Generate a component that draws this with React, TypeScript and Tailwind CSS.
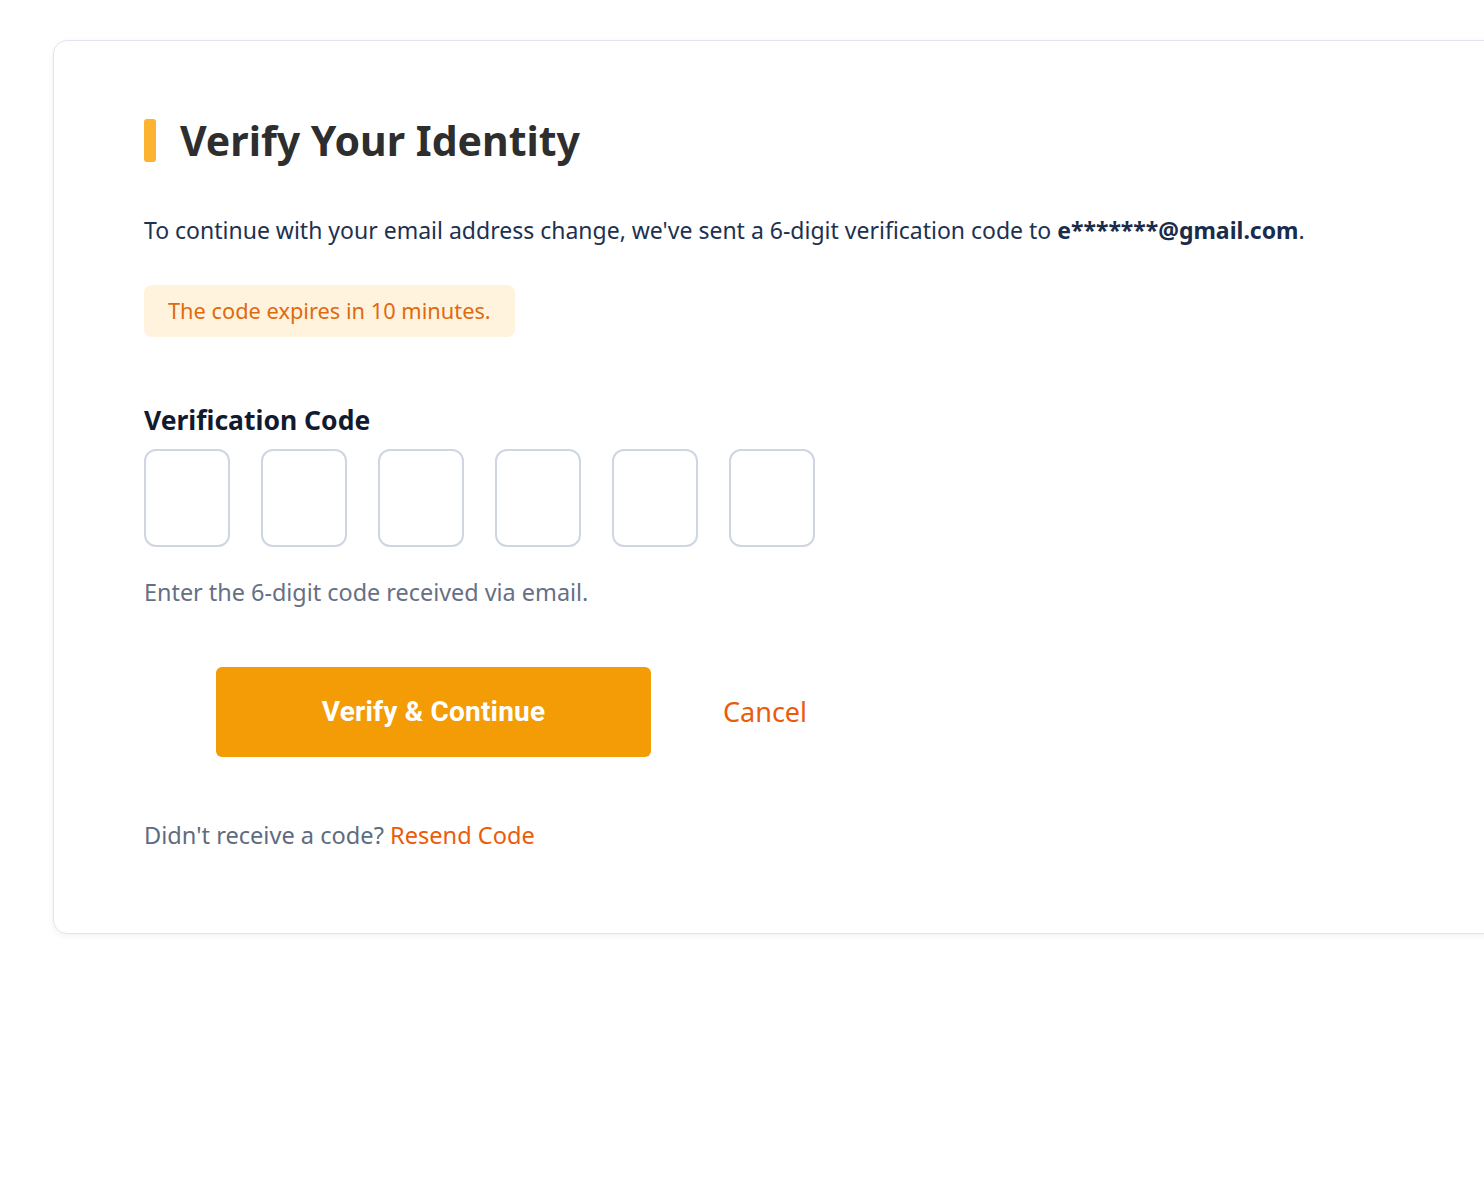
import React from 'react';

const digits = [0, 1, 2, 3, 4, 5];

export default function App() {
  return (
    <div className="min-h-[1178px] w-full overflow-hidden bg-white font-['Noto_Sans','Lato',sans-serif]">
      <div className="pl-[53px] pt-[40px]">
        {/* Card */}
        <div className="w-[1500px] rounded-[14px] border border-[#e2e4ef] bg-white pb-[83px] pl-[90px] pt-[78px] shadow-[0_2px_6px_rgba(30,40,90,0.06)]">
          <div className="flex h-[43px] items-center gap-6">
            <span className="h-[43px] w-3 rounded-[3px] bg-[#fbb331]" />
            <h1 className="text-[41px] font-bold leading-none text-[#2e2e2e]">Verify Your Identity</h1>
          </div>

          <p className="mt-[52px] text-[23px] leading-8 text-[#1d3150]">
            To continue with your email address change, we've sent a 6-digit verification code to{' '}
            <strong className="font-bold text-[#192c4b]">e*******@gmail.com</strong>.
          </p>

          <div className="mt-[39px] inline-flex h-[52px] items-center rounded-lg bg-[#fff3de] px-6 text-[21.8px] text-[#df6a0e]">
            The code expires in 10 minutes.
          </div>

          {/* Code inputs */}
          <label className="mt-[67px] block text-[26.5px] font-bold leading-8 text-[#111a2e]">Verification Code</label>
          <div className="mt-[13px] flex gap-[31px]">
            {digits.map((d) => (
              <input
                key={d}
                maxLength={1}
                className="h-[98px] w-[86px] rounded-xl border-2 border-[#cfd6e2] bg-white text-center text-3xl outline-none"
              />
            ))}
          </div>
          <p className="mt-[30px] text-[23.4px] leading-[30px] text-[#667085]">Enter the 6-digit code received via email.</p>

          <div className="ml-[72px] mt-[60px] flex items-center gap-[72px]">
            <button className="h-[90px] w-[435px] rounded-md bg-[#f39c06] font-['Roboto',sans-serif] text-[28px] font-bold tracking-[0.2px] text-white">
              Verify &amp; Continue
            </button>
            <button className="text-[27px] text-[#ea5b0c]">Cancel</button>
          </div>

          <p className="mt-[63px] text-[23.6px] leading-[30px] text-[#5f6b7e]">
            Didn't receive a code? <a href="#" className="text-[#ea5b0c]">Resend Code</a>
          </p>
        </div>
      </div>
    </div>
  );
}
